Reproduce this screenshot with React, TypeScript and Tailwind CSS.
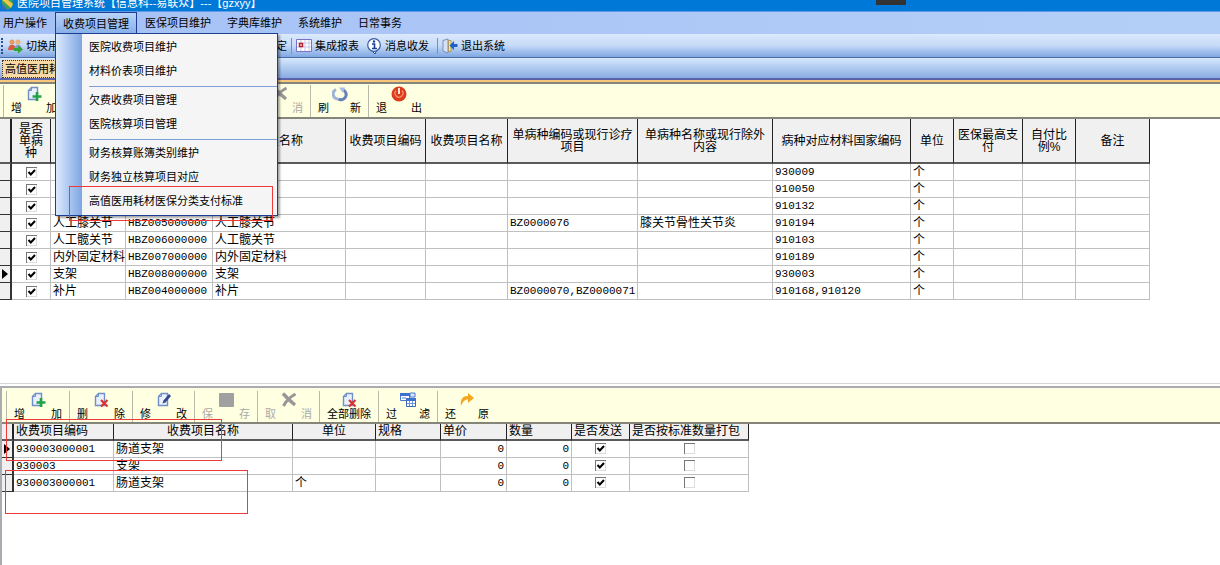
import React from 'react';

interface Column {
  title: string;
  width: string;
  align?: string;
}

const menus = ['医保项目维护', '字典库维护', '系统维护', '日常事务'];

const popupGroups = [
  ['医院收费项目维护', '材料价表项目维护'],
  ['欠费收费项目管理', '医院核算项目管理'],
  ['财务核算账簿类别维护', '财务独立核算项目对应', '高值医用耗材医保分类支付标准'],
];

const materialColumns: Column[] = [
  { title: '是否单病种', width: 'w-[39px]' },
  { title: '', width: 'w-[75px]' },
  { title: '', width: 'w-[87px]' },
  { title: '分类名称', width: 'w-[133px]' },
  { title: '收费项目编码', width: 'w-[80px]' },
  { title: '收费项目名称', width: 'w-[82px]' },
  { title: '单病种编码或现行诊疗项目', width: 'w-[130px]' },
  { title: '单病种名称或现行除外内容', width: 'w-[135px]' },
  { title: '病种对应材料国家编码', width: 'w-[138px]' },
  { title: '单位', width: 'w-[43px]' },
  { title: '医保最高支付', width: 'w-[69px]' },
  { title: '自付比例%', width: 'w-[53px]' },
  { title: '备注', width: 'w-[74px]' },
];

const materialRows = [
  { name: '', code: '', disease: '', diseaseName: '', national: '930009' },
  { name: '', code: '', disease: '', diseaseName: '', national: '910050' },
  { name: '', code: '', disease: '', diseaseName: '', national: '910132' },
  { name: '人工膝关节', code: 'HBZ005000000', disease: 'BZ0000076', diseaseName: '膝关节骨性关节炎', national: '910194' },
  { name: '人工髋关节', code: 'HBZ006000000', disease: '', diseaseName: '', national: '910103' },
  { name: '内外固定材料', code: 'HBZ007000000', disease: '', diseaseName: '', national: '910189' },
  { name: '支架', code: 'HBZ008000000', disease: '', diseaseName: '', national: '930003', current: true },
  { name: '补片', code: 'HBZ004000000', disease: 'BZ0000070,BZ0000071', diseaseName: '', national: '910168,910120' },
];

const chargeColumns: Column[] = [
  { title: '收费项目编码', width: 'w-[100px]', align: 'text-left' },
  { title: '收费项目名称', width: 'w-[179px]', align: 'text-center' },
  { title: '单位', width: 'w-[83px]', align: 'text-center' },
  { title: '规格', width: 'w-[65px]', align: 'text-left' },
  { title: '单价', width: 'w-[66px]', align: 'text-left' },
  { title: '数量', width: 'w-[65px]', align: 'text-left' },
  { title: '是否发送', width: 'w-[58px]', align: 'text-left' },
  { title: '是否按标准数量打包', width: 'w-[119px]', align: 'text-left' },
];

const chargeRows = [
  { code: '930003000001', name: '肠道支架', unit: '', current: true },
  { code: '930003', name: '支架', unit: '' },
  { code: '930003000001', name: '肠道支架', unit: '个' },
];

const cell = 'h-[17px] overflow-hidden whitespace-nowrap border-b border-r border-[#c0c0c0] p-0 px-[2px] leading-4';
const headCell = 'border-b-2 border-r border-b-[#5a5a5a] border-r-[#222] bg-[#f0f0f0] p-0 px-[2px] font-normal';
const gutterCell = 'h-[17px] border-b border-r-2 border-[#333] bg-[#f0f0f0] p-0';
const mono = "font-['Liberation_Mono','Noto_Sans_CJK_SC',monospace] text-[11px]";

const PageIcon: React.FC<{ children?: React.ReactNode }> = ({ children }) => (
  <svg width="16" height="16" viewBox="0 0 16 16" fill="none">
    <path d="M5.5 1.5h6v12h-9v-9z" fill="#eaf1fd" stroke="#6f8fc9" strokeWidth="1.4" />
    <path d="M5.5 1.5v3h-3" stroke="#6f8fc9" />
    {children}
  </svg>
);

const AddIcon = () => (
  <PageIcon>
    <path d="M11 6v9M6.5 10.5h9" stroke="#22a347" strokeWidth="2.6" />
  </PageIcon>
);

const DeleteIcon = () => (
  <PageIcon>
    <path d="M8 8l6.5 6.5M14.5 8L8 14.5" stroke="#e03131" strokeWidth="2.2" />
  </PageIcon>
);

const EditIcon = () => (
  <PageIcon>
    <path d="M6.5 11.5l1-3L13 2l2 2-5.500 6.500z" fill="#34478c" />
  </PageIcon>
);

const SaveIcon = () => (
  <svg width="16" height="16" viewBox="0 0 16 16">
    <rect x="1" y="1" width="15" height="14" rx="1" fill="#a0a0a0" />
  </svg>
);

const CancelIcon = () => (
  <svg width="16" height="16" viewBox="0 0 16 16" stroke="#979797" fill="none">
    <path d="M2 1.500C6 6 9 9 14 13" strokeWidth="3.400" />
    <path d="M14.500 2C9 5 5 9 2.500 14" strokeWidth="3" />
  </svg>
);

const RefreshIcon = () => (
  <svg width="16" height="16" viewBox="0 0 16 16" fill="none" strokeWidth="3">
    <path d="M4 3.500A5 5 0 0 0 6.500 13" stroke="#9db3dc" />
    <path d="M6.500 13A5 5 0 0 0 11.500 4" stroke="#6680bb" />
    <path d="M7 1.500h6l-2 5.500z" fill="#a9bce2" />
  </svg>
);

const PowerIcon = () => (
  <svg width="16" height="16" viewBox="0 0 16 16" fill="none">
    <circle cx="8" cy="8" r="7.500" fill="#dd3c1c" />
    <path d="M5 4.500a4 4 0 1 0 6 0" stroke="#f0906f" strokeWidth="1.300" />
    <path d="M8 2v6" stroke="#ffe3d6" strokeWidth="2" />
  </svg>
);

const FilterIcon = () => (
  <svg width="16" height="16" viewBox="0 0 16 16" fill="none">
    <path d="M.5 1.500h9v7h-9z" fill="#fff" stroke="#4a7bd0" />
    <path d="M0 1h10v3H0z" fill="#3f72cf" />
    <path d="M2 6h4" stroke="#4a7bd0" />
    <path d="M10 1h5v4h-5z" fill="#dbe7fb" stroke="#4a7bd0" />
    <path d="M6.500 6.500h9v8h-9z" fill="#fff" stroke="#3a68bd" />
    <path d="M6 6h10v3H6z" fill="#3f72cf" />
    <path d="M7 11.500h8M9.500 9v5M12.500 9v5" stroke="#6e94dc" />
  </svg>
);

const RestoreIcon = () => (
  <svg width="16" height="16" viewBox="0 0 16 16">
    <path d="M2 14C1 7 4 4 9 4V1l6 5-6 5V7.500C6 7.500 4 9 2 14z" fill="#f2a71f" />
  </svg>
);

const UsersIcon = () => (
  <svg width="16" height="16" viewBox="0 0 16 16">
    <circle cx="5" cy="4" r="2.500" fill="#e59a5c" />
    <path d="M1 12c0-7 8-7 8 0z" fill="#d9583f" />
    <circle cx="11" cy="4" r="2.500" fill="#e8b27a" />
    <path d="M7 12c0-7 8-7 8 0z" fill="#8a9bd0" />
    <path d="M7 10h4V7.500l5 4-5 4V13H7z" fill="#35a33a" />
  </svg>
);

const ReportIcon = () => (
  <svg width="16" height="16" viewBox="0 0 16 16" fill="none">
    <path d="M.5 1.500h15v12H.5z" fill="#fff" stroke="#7a70c8" />
    <path d="M1 5h14M1 9h14M5 2v11M9 2v11M13 2v11" stroke="#c9c6ea" />
    <path d="M3.500 5.500h3v3h-3z" fill="#fff" stroke="#b3202b" strokeWidth="1.500" />
  </svg>
);

const InfoIcon = () => (
  <svg width="16" height="16" viewBox="0 0 16 16" fill="none">
    <path d="M6 13l3 3 1.500-3.500" fill="#fff" stroke="#24489b" />
    <circle cx="8" cy="7" r="6.300" fill="#fff" stroke="#3a5ba5" strokeWidth="1.200" />
    <path d="M6 6h2.500v4.500M6 10.500h5" stroke="#1b3f97" strokeWidth="1.600" />
    <circle cx="8" cy="3.500" r="1.200" fill="#1b3f97" />
  </svg>
);

const ExitIcon = () => (
  <svg width="16" height="16" viewBox="0 0 16 16" fill="none">
    <path d="M1 2.500l5-1.500v14l-5-2z" fill="#d7e3f5" stroke="#7690b8" />
    <path d="M6.500 2.500H9v11H6.500z" fill="#f6e3a3" stroke="#a18e4a" strokeWidth=".8" />
    <path d="M15.500 6H12V3L7.500 7.500 12 12V9h3.500z" fill="#1d62c8" />
  </svg>
);

interface ToolButtonProps {
  label: string;
  icon: React.ReactNode;
  size: string;
  disabled?: boolean;
}

// Two-character labels are spread to both edges, longer ones stay together.
const ToolButton: React.FC<ToolButtonProps> = ({ label, icon, size, disabled }) => (
  <button
    type="button"
    disabled={disabled}
    aria-label={label}
    className={`flex h-full flex-col items-center border-l border-[#b9b9a8] px-[7px] pt-px text-[11px] leading-3 ${size} ${disabled ? 'text-[#aaa]' : 'text-black'}`}
  >
    <span className="flex h-4 shrink-0 items-center">{icon}</span>
    <span className="flex w-full justify-between whitespace-nowrap">
      {label.length === 2 ? label.split('').map((c) => <span key={c}>{c}</span>) : label}
    </span>
  </button>
);

const CheckBox: React.FC<{ label: string; checked?: boolean }> = ({ label, checked }) => (
  <span className="mx-auto grid size-[11px]">
    <input
      type="checkbox"
      aria-label={label}
      defaultChecked={checked}
      className="peer col-start-1 row-start-1 size-[11px] appearance-none border-l border-t border-[#777] bg-white shadow-[inset_-1px_-1px_0_#ddd]"
    />
    <svg viewBox="0 0 11 11" className="pointer-events-none invisible col-start-1 row-start-1 size-[11px] peer-checked:visible">
      <path d="M2.500 5l2.300 2.500L9 3" fill="none" stroke="#000" strokeWidth="2" />
    </svg>
  </span>
);

const RowMarker: React.FC<{ current?: boolean }> = ({ current }) => (
  <td className={gutterCell}>
    {current && (
      <svg width="6" height="10" viewBox="0 0 6 10" className="mx-auto">
        <path d="M0 0l6 5-6 5z" fill="#000" />
      </svg>
    )}
  </td>
);

const MenuBar = () => (
  <nav className="relative z-20 flex h-[22px] shrink-0 bg-linear-to-r from-[#a5c0f5] to-[#b4cff7] text-[11px] leading-4">
    <button type="button" className="pl-[3px] pr-2">用户操作</button>
    <div className="relative flex">
      <button type="button" className="border-x border-t border-[#1c3f94] bg-linear-to-b from-[#b9d3f8] to-[#86aee8] px-[7px]">
        收费项目管理
      </button>
      <div className="absolute left-0 top-[21px] flex w-[223px] border border-[#1c3f94] bg-[#f5f5f5] shadow-[2px_2px_2px_rgba(0,0,0,0.35)]">
        <div className="w-[26px] shrink-0 bg-linear-to-r from-[#dbeafc] to-[#7fa5e2]"></div>
        <ul className="grow pb-[2px] pl-[7px] pt-px">
          {popupGroups.map((group, index) => (
            <li key={index} className={index > 0 ? 'pt-[3px]' : ''}>
              <ul className={index > 0 ? 'border-t border-[#7f9fd6] pt-px' : ''}>
                {group.map((item) => (
                  <li key={item}>
                    <button type="button" className="block h-6 w-full text-left">{item}</button>
                  </li>
                ))}
              </ul>
            </li>
          ))}
        </ul>
        <div className="pointer-events-none absolute left-[13px] top-[152px] h-[35px] w-[204px] border border-[#f03a3a]"></div>
      </div>
    </div>
    {menus.map((menu) => (
      <button key={menu} type="button" className="px-2">{menu}</button>
    ))}
  </nav>
);

const QuickBar = () => (
  <div className="flex h-6 shrink-0 items-center border-b border-[#4c6ca8] bg-linear-to-b from-[#dbe9fc] via-[#c5daf7] to-[#80a7e2] text-[11px] leading-4">
    <div className="mr-1 h-4 w-[3px] border-r-2 border-dotted border-[#2c4f96]"></div>
    <div className="flex w-[280px] justify-between">
      <button type="button" className="flex items-center gap-[3px]"><UsersIcon />切换用户</button>
      <button type="button">设定</button>
    </div>
    <div className="ml-1 mr-1 h-4 border-l border-[#6f8fc9]"></div>
    <button type="button" className="flex items-center gap-[3px]"><ReportIcon />集成报表</button>
    <button type="button" className="ml-[7px] flex items-center gap-[3px]"><InfoIcon />消息收发</button>
    <div className="ml-2 mr-1 h-4 border-l border-[#6f8fc9]"></div>
    <button type="button" className="flex items-center gap-[3px]"><ExitIcon />退出系统</button>
  </div>
);

const MaterialPane = () => (
  <section className="min-h-0 flex-5 overflow-hidden bg-white">
    <div className="flex h-[35px] border-b-2 border-[#85857a] bg-[#ffffe1] pl-[3px] pt-px">
      <ToolButton label="增加" icon={<AddIcon />} size="w-[61px]" />
      <ToolButton label="删除" icon={<DeleteIcon />} size="w-[61px]" />
      <ToolButton label="修改" icon={<EditIcon />} size="w-[62px]" />
      <ToolButton label="保存" icon={<SaveIcon />} size="w-[61px]" disabled />
      <ToolButton label="取消" icon={<CancelIcon />} size="w-[62px]" disabled />
      <ToolButton label="刷新" icon={<RefreshIcon />} size="w-[58px]" />
      <ToolButton label="退出" icon={<PowerIcon />} size="w-[61px]" />
    </div>
    <table className="w-[1150px] table-fixed border-separate border-spacing-0 text-xs">
      <colgroup>
        <col className="w-[12px]" />
        {materialColumns.map((column, index) => (
          <col key={index} className={column.width} />
        ))}
      </colgroup>
      <thead>
        <tr className="h-[45px] leading-3">
          <th className={`${headCell} border-r-2`}></th>
          {materialColumns.map((column, index) => (
            <th key={index} className={`${headCell} ${index === 0 ? 'px-[6px]' : ''}`}>{column.title}</th>
          ))}
        </tr>
      </thead>
      <tbody>
        {materialRows.map((row, index) => (
          <tr key={index}>
            <RowMarker current={row.current} />
            <td className={cell}><CheckBox label="是否单病种" checked /></td>
            <td className={cell}>{row.name}</td>
            <td className={`${cell} ${mono}`}>{row.code}</td>
            <td className={cell}>{row.name}</td>
            <td className={cell}></td>
            <td className={cell}></td>
            <td className={`${cell} ${mono}`}>{row.disease}</td>
            <td className={cell}>{row.diseaseName}</td>
            <td className={`${cell} ${mono}`}>{row.national}</td>
            <td className={cell}>个</td>
            <td className={cell}></td>
            <td className={cell}></td>
            <td className={cell}></td>
          </tr>
        ))}
      </tbody>
    </table>
  </section>
);

const ChargePane = () => (
  <section className="relative min-h-0 flex-3 border-t border-[#d4d4d4] bg-white pt-[2px]">
    <div className="h-full border-l-2 border-t-2 border-[#a9acb0]">
      <div className="flex h-9 border-b-2 border-[#85857a] bg-[#ffffe1] pl-1 pt-[3px]">
        <ToolButton label="增加" icon={<AddIcon />} size="w-[63px]" />
        <ToolButton label="删除" icon={<DeleteIcon />} size="w-[63px]" />
        <ToolButton label="修改" icon={<EditIcon />} size="w-[62px]" />
        <ToolButton label="保存" icon={<SaveIcon />} size="w-[63px]" disabled />
        <ToolButton label="取消" icon={<CancelIcon />} size="w-[62px]" disabled />
        <ToolButton label="全部删除" icon={<DeleteIcon />} size="w-[59px]" />
        <ToolButton label="过滤" icon={<FilterIcon />} size="w-[59px]" />
        <ToolButton label="还原" icon={<RestoreIcon />} size="w-[59px]" />
      </div>
      <table className="w-[747px] table-fixed border-separate border-spacing-0 text-xs">
        <colgroup>
          <col className="w-[12px]" />
          {chargeColumns.map((column) => (
            <col key={column.title} className={column.width} />
          ))}
        </colgroup>
        <thead>
          <tr className="h-[17px] leading-[15px]">
            <th className={`${headCell} border-r-2`}></th>
            {chargeColumns.map((column) => (
              <th key={column.title} className={`${headCell} whitespace-nowrap ${column.align}`}>{column.title}</th>
            ))}
          </tr>
        </thead>
        <tbody>
          {chargeRows.map((row, index) => (
            <tr key={index}>
              <RowMarker current={row.current} />
              <td className={`${cell} ${mono}`}>{row.code}</td>
              <td className={cell}>{row.name}</td>
              <td className={cell}>{row.unit}</td>
              <td className={cell}></td>
              <td className={`${cell} ${mono} text-right`}>0</td>
              <td className={`${cell} ${mono} text-right`}>0</td>
              <td className={cell}><CheckBox label="是否发送" checked /></td>
              <td className={cell}><CheckBox label="是否按标准数量打包" /></td>
            </tr>
          ))}
        </tbody>
      </table>
    </div>
    <div className="pointer-events-none absolute left-[6px] top-[35px] h-[42px] w-[216px] border border-[#f03a3a]"></div>
    <div className="pointer-events-none absolute left-[5px] top-[86px] h-[44px] w-[243px] border border-[#f03a3a]"></div>
  </section>
);

const App: React.FC = () => {
  return (
    <div className="flex h-screen flex-col overflow-hidden bg-white font-['Liberation_Sans','Noto_Sans_CJK_SC',sans-serif] text-black">
      <header className="relative flex h-3 shrink-0 items-end overflow-hidden border-b border-[#5d9be6] bg-[#0078d7] pl-[2px]">
        <svg width="11" height="11" viewBox="0 0 11 11" className="shrink-0">
          <circle cx="4" cy="3" r="7" fill="#3f9e58" />
          <path d="M0 0l9 8 2-4L6 0z" fill="#e9c64c" />
          <path d="M0 4l6 6H0z" fill="#2b6fc4" />
        </svg>
        <h1 className="ml-1 whitespace-nowrap text-[11px] leading-4 text-white">
          医院项目管理系统【信息科--易联众】---【gzxyy】
        </h1>
        <div className="absolute left-[876px] top-0 h-[5px] w-[30px] bg-[#333]"></div>
      </header>
      <MenuBar />
      <QuickBar />
      <div className="flex h-[22px] shrink-0 items-end border-b-2 border-[#5a62a8] bg-linear-to-b from-[#d6e8fd] to-[#8aace2] pl-[2px]">
        <button type="button" className="h-[18px] whitespace-nowrap border border-dotted border-[#333] bg-[#f7d9a6] px-[2px] text-[11px] leading-4">
          高值医用耗材医保分类支付标准
        </button>
      </div>
      <div className="h-1 shrink-0 border-b-2 border-t-2 border-b-[#85857a] border-t-[#f9c77c]"></div>
      <MaterialPane />
      <ChargePane />
    </div>
  );
};

export default App;
